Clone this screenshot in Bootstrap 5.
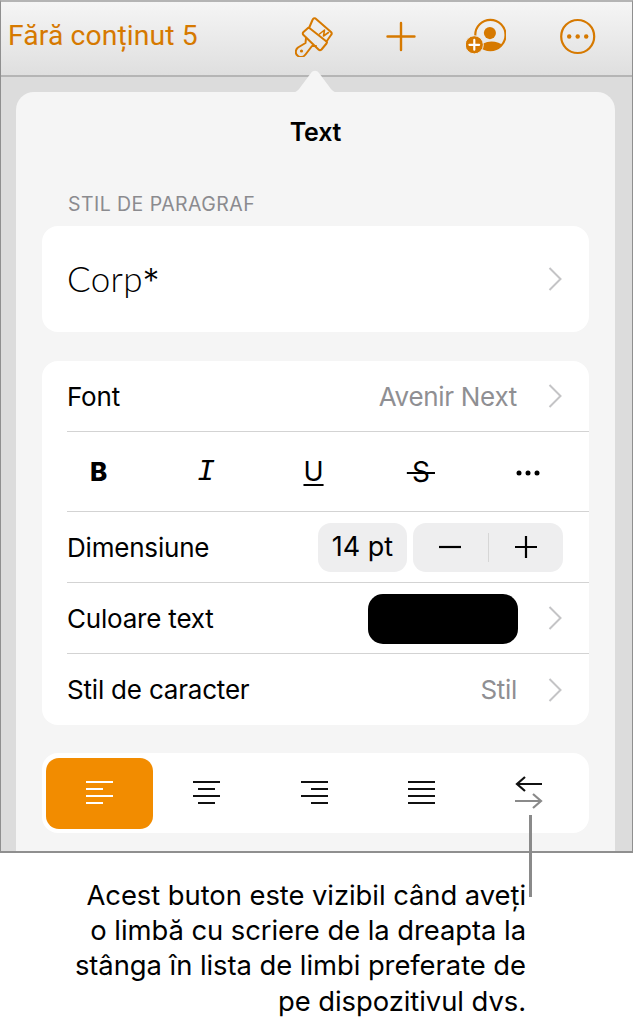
<!doctype html>
<html lang="ro">
<head>
<meta charset="utf-8">
<title>Text</title>
<link href="https://cdn.jsdelivr.net/npm/bootstrap@5.3.0/dist/css/bootstrap.min.css" rel="stylesheet">
<style>
html,body{margin:0;background:#fff;}
body{width:633px;height:1021px;overflow:hidden;position:relative;font-family:Inter,"Liberation Sans",sans-serif;color:#000;}
.ios-screen{height:853px;width:633px;border:1px solid #8f8f8f;border-top:2px solid #b4b4b4;border-bottom:2px solid #8f8f8f;background:#dcdcdc;position:relative;overflow:hidden;}
.ios-bar{height:75px;background:linear-gradient(#f5f5f5,#dfdfdf);border-bottom:2px solid #b5b5b5;padding:0 35px 4px 7px;}
.ios-title{color:#d67900;font-family:Roboto,sans-serif;font-size:28.300px;letter-spacing:.1px;}
.ios-tool{flex:none;width:40px;height:40px;}
.gap-a{margin-left:46px;}.gap-b{margin-left:45px;}.gap-c{margin-left:51px;}
.ios-pop{position:absolute;left:15px;top:90px;width:599px;height:780px;background:#f5f5f5;border-radius:18px;padding:0 26px;}
.ios-arrow{position:absolute;left:284px;top:68px;width:60px;height:24px;}
.pop-title{height:80px;font-size:25px;font-weight:600;letter-spacing:-.2px;padding-top:20px;text-align:center;line-height:40px;}
.pop-sub{font-size:19.500px;color:#8b8b8f;letter-spacing:.45px;height:54px;line-height:22px;padding:21px 0 0 26px;box-sizing:border-box;}
.ios-group{background:#fff;border-radius:16px;}
.group-style{height:106px;padding:0 27px 0 25px;margin-bottom:29px;}
.corp-text{font-family:Lato,sans-serif;font-weight:300;font-size:35px;letter-spacing:.3px;color:#000;}
.corp-star{font-family:Inter,sans-serif;font-weight:300;font-size:33px;}
.ios-chev{width:14px;height:26px;flex:none;}
.ios-row{height:71px;margin-left:25px;padding:0 27px 0 0;border-bottom:1px solid #d3d3d3;font-size:26px;letter-spacing:-.2px;}
.ios-row.last-row{border-bottom:0;}
.line-wrap{border-bottom:1px solid #d3d3d3;margin-left:25px;}
.fmt-row{height:79px;margin-left:-22px;padding-right:7px;}
.ios-val{color:#8f8f93;margin-right:31px;letter-spacing:-.3px;}
.fmt-cell{flex:1 1 0;text-align:center;font-size:26px;line-height:1;}
.fmt-b{font-weight:800;}
.fmt-i{font-family:"Liberation Mono",monospace;font-style:italic;font-size:30px;}
.fmt-u{text-decoration:underline;text-decoration-thickness:1.500px;text-underline-offset:3px;font-size:27px;}
.fmt-s{text-decoration:line-through;text-decoration-thickness:1.500px;font-size:28px;}
.step-val{background:#eeeeef;border-radius:13px;width:89px;height:49px;font-size:27px;letter-spacing:0;margin-right:6px;}
.step-box{background:#eeeeef;border-radius:13px;width:150px;height:49px;padding:0 25px;margin-right:-1px;}
.step-rule{width:1px;height:29px;background:#d6d6d6;}
.swatch-box{width:150px;height:50px;background:#000;border-radius:15px;margin:1px 30px 0 0;}
.group-align{height:80px;margin-top:28px;padding:0 6px 0 4px;}
.align-on{background:#f28c00;border-radius:13px;}
.align-cell{flex:1 1 0;height:71px;}
.ios-note{position:absolute;left:40px;top:878px;width:486px;text-align:right;font-size:27.400px;line-height:35.200px;letter-spacing:-.05px;}
.ios-lead{position:absolute;left:529px;top:815px;width:3px;height:82px;background:#8a8a8a;}
</style>
</head>
<body>
<div class="ios-screen">
  <div class="ios-bar d-flex align-items-center">
    <div class="ios-title">Fără conținut 5</div>
    <svg class="ios-tool ms-auto" viewBox="0 0 40 40" fill="none" stroke="#d67900" stroke-width="2" stroke-linejoin="round" stroke-linecap="round"><path d="M14 11 17.500 3Q18.500 .5 20.500 1.500L36 15Q37.500 16.500 36 18L31.500 24.500"/><path d="M8.500 15 13 11Q14 10.500 15 11.500L31.500 24.500Q32.500 25.500 31.500 26.500L26.500 32.500Q25 34 23.500 32.500L8.500 18Q7 16.500 8.500 15Z"/><path d="M11 21 10.500 26 3 30.500C0 33 0 37 3 39 6 41 9 39.500 10.500 37.500L17 29 21 29"/><path d="M24.500 17 29.500 13 28.500 19 33.500 15.500" stroke-width="1.600"/><circle cx="6.500" cy="34" r="1.600" fill="#d67900" stroke="none"/></svg>
    <svg class="ios-tool gap-a" viewBox="0 0 40 40" fill="none" stroke="#d67900" stroke-width="2.400" stroke-linecap="round"><path d="M20 6V33M6.500 19.500H33.500"/></svg>
    <svg class="ios-tool gap-b" viewBox="0 0 41 40"><defs><clipPath id="ring-clip"><circle cx="25" cy="18" r="15.500"/></clipPath></defs><circle cx="25" cy="18" r="15.500" fill="none" stroke="#d67900" stroke-width="2.200"/><circle cx="24.500" cy="16" r="6.200" fill="#d67900"/><path clip-path="url(#ring-clip)" d="M17 40V27Q22 24.500 26 24.500 33 24.500 41 30V40Z" fill="#d67900"/><circle cx="8.500" cy="28" r="9.300" fill="#d67900" stroke="#eaeaea" stroke-width="1"/><path d="M8.500 23V33M3.500 28H13.500" stroke="#fff" stroke-width="2.200" stroke-linecap="round"/></svg>
    <svg class="ios-tool gap-c" viewBox="0 0 40 40"><circle cx="20.700" cy="19.500" r="16.500" fill="none" stroke="#d67900" stroke-width="2.200"/><circle cx="12.200" cy="19.500" r="2.200" fill="#d67900"/><circle cx="20.700" cy="19.500" r="2.200" fill="#d67900"/><circle cx="29.200" cy="19.500" r="2.200" fill="#d67900"/></svg>
  </div>
  <svg class="ios-arrow" viewBox="0 0 60 24"><path d="M0 24C10 24 13 21 17 15L26 3C28 0 32 0 34 3L43 15C47 21 50 24 60 24Z" fill="#f5f5f5"/></svg>
  <div class="ios-pop">
    <div class="pop-title">Text</div>
    <div class="pop-sub">STIL DE PARAGRAF</div>
    <div class="ios-group group-style d-flex align-items-center justify-content-between">
      <span class="corp-text">Corp<span class="corp-star">*</span></span>
      <svg class="ios-chev" viewBox="0 0 14 26" fill="none" stroke="#c4c4c6" stroke-width="2"><path d="M1.500 2 12.500 13 1.500 24"/></svg>
    </div>
    <div class="ios-group">
      <div class="ios-row d-flex align-items-center">
        <span>Font</span><span class="ios-val ms-auto">Avenir Next</span>
        <svg class="ios-chev" viewBox="0 0 14 26" fill="none" stroke="#c4c4c6" stroke-width="2"><path d="M1.500 2 12.500 13 1.500 24"/></svg>
      </div>
      <div class="line-wrap">
        <div class="d-flex align-items-center fmt-row">
          <span class="fmt-cell fmt-b">B</span>
          <span class="fmt-cell fmt-i">I</span>
          <span class="fmt-cell"><span class="fmt-u">U</span></span>
          <span class="fmt-cell"><span class="fmt-s">&#8201;S&#8201;</span></span>
          <span class="fmt-cell"><svg width="26" height="6" viewBox="0 0 26 6"><circle cx="4" cy="3" r="2.500"/><circle cx="13" cy="3" r="2.500"/><circle cx="22" cy="3" r="2.500"/></svg></span>
        </div>
      </div>
      <div class="ios-row d-flex align-items-center">
        <span>Dimensiune</span>
        <div class="step-val d-flex align-items-center justify-content-center ms-auto">14 pt</div>
        <div class="step-box d-flex align-items-center justify-content-between">
          <svg width="24" height="4" viewBox="0 0 24 4"><path d="M1 2H23" stroke="#000" stroke-width="2.200"/></svg>
          <span class="step-rule"></span>
          <svg width="24" height="24" viewBox="0 0 24 24"><path d="M12 1V23M1 12H23" stroke="#000" stroke-width="2.200"/></svg>
        </div>
      </div>
      <div class="ios-row d-flex align-items-center">
        <span>Culoare text</span>
        <div class="swatch-box ms-auto"></div>
        <svg class="ios-chev" viewBox="0 0 14 26" fill="none" stroke="#c4c4c6" stroke-width="2"><path d="M1.500 2 12.500 13 1.500 24"/></svg>
      </div>
      <div class="ios-row last-row d-flex align-items-center">
        <span>Stil de caracter</span><span class="ios-val ms-auto">Stil</span>
        <svg class="ios-chev" viewBox="0 0 14 26" fill="none" stroke="#c4c4c6" stroke-width="2"><path d="M1.500 2 12.500 13 1.500 24"/></svg>
      </div>
    </div>
    <div class="ios-group group-align d-flex align-items-center">
      <div class="align-cell align-on d-flex align-items-center justify-content-center">
        <svg width="28" height="26" viewBox="0 0 28 26" stroke="#fff" stroke-width="2"><path d="M0 2H27M0 9H17M0 16H27M0 23H17"/></svg>
      </div>
      <div class="align-cell d-flex align-items-center justify-content-center">
        <svg width="28" height="26" viewBox="0 0 28 26" stroke="#111" stroke-width="2"><path d="M0 2H27M5 9H22M0 16H27M5 23H22"/></svg>
      </div>
      <div class="align-cell d-flex align-items-center justify-content-center">
        <svg width="28" height="26" viewBox="0 0 28 26" stroke="#111" stroke-width="2"><path d="M0 2H27M10 9H27M0 16H27M10 23H27"/></svg>
      </div>
      <div class="align-cell d-flex align-items-center justify-content-center">
        <svg width="28" height="26" viewBox="0 0 28 26" stroke="#111" stroke-width="2"><path d="M0 2H27M0 9H27M0 16H27M0 23H27"/></svg>
      </div>
      <div class="align-cell d-flex align-items-center justify-content-center">
        <svg width="28" height="34" viewBox="0 0 28 34" fill="none" stroke-width="2.200"><path d="M27 8H2M10 1 2 8 10 15" stroke="#111"/><path d="M0 25H26M18 18 26 25 18 32" stroke="#8a8a8a"/></svg>
      </div>
    </div>
  </div>
</div>
<div class="ios-lead"></div>
<p class="ios-note mb-0">Acest buton este vizibil când aveți<br>o limbă cu scriere de la dreapta la<br>stânga în lista de limbi preferate de<br>pe dispozitivul dvs.</p>
<script src="https://cdn.jsdelivr.net/npm/bootstrap@5.3.0/dist/js/bootstrap.bundle.min.js"></script>
</body>
</html>
